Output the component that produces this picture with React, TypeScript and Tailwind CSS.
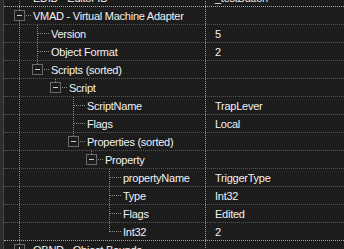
import React from 'react';

type Row = {
  name: string;
  value: string;
  level: number;
  kind: 'leaf' | 'open' | 'closed';
  last: boolean;
  cont: number[];
  bright?: boolean;
};

const rows: Row[] = [
  { name: 'EDID - Editor ID', value: '_testButton', level: 0, kind: 'leaf', last: false, cont: [], bright: true },
  { name: 'VMAD - Virtual Machine Adapter', value: '', level: 0, kind: 'open', last: false, cont: [] },
  { name: 'Version', value: '5', level: 1, kind: 'leaf', last: false, cont: [0] },
  { name: 'Object Format', value: '2', level: 1, kind: 'leaf', last: false, cont: [0] },
  { name: 'Scripts (sorted)', value: '', level: 1, kind: 'open', last: true, cont: [0] },
  { name: 'Script', value: '', level: 2, kind: 'open', last: true, cont: [0] },
  { name: 'ScriptName', value: 'TrapLever', level: 3, kind: 'leaf', last: false, cont: [0] },
  { name: 'Flags', value: 'Local', level: 3, kind: 'leaf', last: false, cont: [0] },
  { name: 'Properties (sorted)', value: '', level: 3, kind: 'open', last: true, cont: [0] },
  { name: 'Property', value: '', level: 4, kind: 'open', last: true, cont: [0] },
  { name: 'propertyName', value: 'TriggerType', level: 5, kind: 'leaf', last: false, cont: [0] },
  { name: 'Type', value: 'Int32', level: 5, kind: 'leaf', last: false, cont: [0] },
  { name: 'Flags', value: 'Edited', level: 5, kind: 'leaf', last: false, cont: [0] },
  { name: 'Int32', value: '2', level: 5, kind: 'leaf', last: true, cont: [0], bright: true },
  { name: 'OBND - Object Bounds', value: '', level: 0, kind: 'closed', last: false, cont: [] },
];

const LINE = '#8a8a8a';

function Guide({ on }: { on: boolean }) {
  return (
    <svg width="18" height="17" className="shrink-0" shapeRendering="crispEdges">
      {on && <line x1="9.5" y1="0" x2="9.5" y2="17" stroke={LINE} strokeDasharray="1 1" />}
    </svg>
  );
}

function Node({ row }: { row: Row }) {
  const box = row.kind !== 'leaf';
  return (
    <svg width="23" height="17" className="shrink-0" shapeRendering="crispEdges">
      {box ? (
        <>
          <line x1="9.5" y1="0" x2="9.5" y2="3" stroke={LINE} strokeDasharray="1 1" />
          {!row.last && <line x1="9.5" y1="14" x2="9.5" y2="17" stroke={LINE} strokeDasharray="1 1" />}
          <rect x="4.5" y="3.5" width="10" height="10" fill="#1c1c1c" stroke="#6a6a6a" />
          <line x1="7" y1="8.5" x2="12" y2="8.5" stroke="#d0d0d0" />
          {row.kind === 'closed' && <line x1="9.5" y1="6" x2="9.5" y2="11" stroke="#d0d0d0" />}
          <line x1="16" y1="8.5" x2="21" y2="8.5" stroke={LINE} strokeDasharray="1 1" />
        </>
      ) : (
        <>
          <line x1="9.5" y1="0" x2="9.5" y2={row.last ? 9 : 17} stroke={LINE} strokeDasharray="1 1" />
          <line x1="10" y1="8.5" x2="21" y2="8.5" stroke={LINE} strokeDasharray="1 1" />
        </>
      )}
    </svg>
  );
}

export default function App() {
  return (
    <div
      className="w-[344px] h-[249px] overflow-hidden bg-[#1c1c1c] flex text-[11px] tracking-[-0.25px] text-[#f2f2f2]"
      style={{ fontFamily: '"Liberation Sans", Arial, sans-serif' }}
    >
      <div className="w-[3px] shrink-0 bg-[#2d2d2d]" />
      <div className="w-px shrink-0 bg-[#454545]" />
      <div className="flex-1 -mt-[11px]">
        {rows.map((row, i) => (
          <div
            key={i}
            className={`flex h-[18px] border-b border-dotted ${row.bright ? 'border-[#a8a8a8]' : 'border-[#555555]'}`}
          >
            <div className="w-[201px] shrink-0 flex items-center pl-[6px] overflow-hidden whitespace-nowrap">
              {Array.from({ length: row.level }).map((_, l) => (
                <Guide key={l} on={row.cont.includes(l)} />
              ))}
              <Node row={row} />
              <span className="leading-[17px] pt-px">{row.name}</span>
            </div>
            <div className="flex-1 border-l border-dotted border-[#9a9a9a] pl-[9px] flex items-center whitespace-nowrap">
              <span className="leading-[17px] pt-px">{row.value}</span>
            </div>
          </div>
        ))}
      </div>
    </div>
  );
}
